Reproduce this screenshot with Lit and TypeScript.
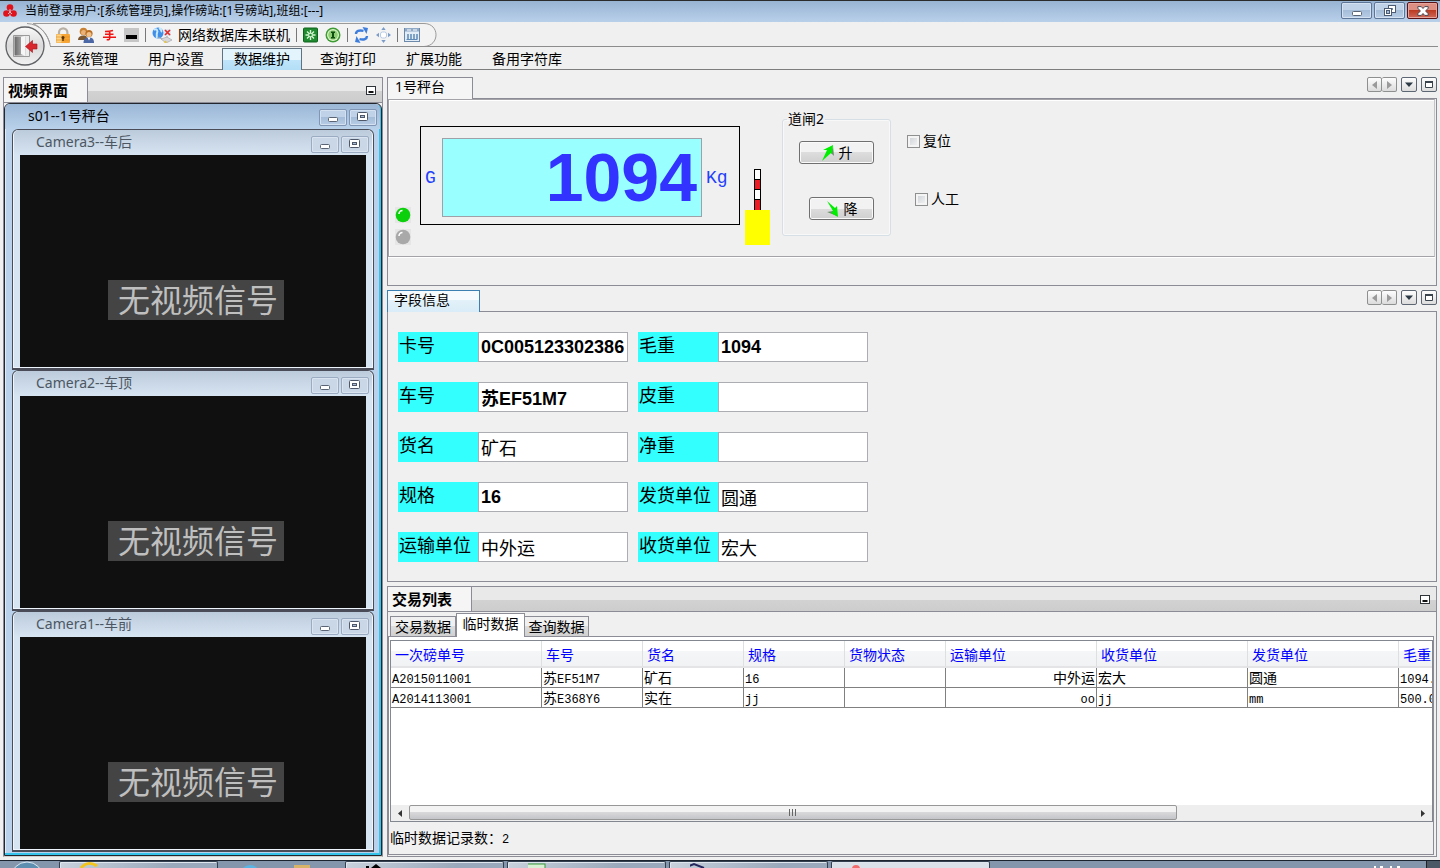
import { LitElement, html, css, svg, nothing } from "lit";
import { customElement, property, state } from "lit/decorators.js";
import { classMap } from "lit/directives/class-map.js";

const base = css`
  * { box-sizing: border-box; }
  button { font: inherit; color: inherit; margin: 0; padding: 0; border: 0; background: none; }
  svg { display: block; flex: none; }
  .winbtn {
    display: flex; align-items: center; justify-content: center;
    width: 28px; height: 17px; border: 1px solid #8096b4; border-radius: 2px;
    background: linear-gradient(#bfd2e7 50%, #a5bdd9 50%, #b8cde6);
    box-shadow: inset 0 0 0 1px #d3e1f1;
  }
`;

/* ---------- window glyphs ---------- */
const minGlyph = html`<svg width="12" height="10" viewBox="0 0 12 10"><rect x="1.500" y="5.500" width="9" height="4" rx="1" fill="#fff" stroke="#5b6474"/></svg>`;
const maxGlyph = html`<svg width="12" height="10" viewBox="0 0 12 10"><rect x=".5" y=".5" width="10" height="8" rx="1" fill="#fff" stroke="#4f5868"/><rect x="3.500" y="3.500" width="4" height="2" fill="#a9bdd6" stroke="#4f5868"/></svg>`;
const restoreGlyph = html`<svg width="12" height="12" viewBox="0 0 12 12"><rect x="4.500" y=".5" width="7" height="7" fill="#fff" stroke="#4c5a72"/><rect x="7" y="3" width="2" height="2" fill="#6f87a8"/><rect x=".5" y="3.500" width="7" height="7" fill="#fff" stroke="#4c5a72"/><rect x="2.500" y="5.500" width="3" height="3" fill="#a9c0dc" stroke="#4c5a72"/></svg>`;
const closeGlyph = html`<svg width="12" height="10" viewBox="0 0 12 10"><path d="M.8.6h3.500L6 2.500 7.700.6h3.500v1.600L8.600 5l2.600 2.700v1.700H7.700L6 7.500 4.300 9.400H.8V7.700L3.400 5 .8 2.200z" fill="#fff" stroke="#4b4650"/></svg>`;

/* ---------- tool icons ---------- */
const icons = {
  lock: svg`<path d="M4 8V5.500a4.200 4.200 0 0 1 8.400 0V8" fill="none" stroke="#b9b0a4" stroke-width="2.200"/><rect x="1" y="7" width="14" height="9" rx="1" fill="#f5a637"/><rect x="1.500" y="7.500" width="5" height="8" fill="#fbd48c"/><path d="M1 10h14M1 13h14" stroke="#e58f1f" stroke-width=".7"/><circle cx="8" cy="10.500" r="1.500" fill="#5a3208"/><path d="M7.300 11h1.400v3H7.300z" fill="#5a3208"/>`,
  users: svg`<circle cx="5.500" cy="4.500" r="3.800" fill="#c98133"/><path d="M0 13c0-3 2-4.500 5.500-4.500S9 10 9 13z" fill="#7b5730"/><circle cx="5.600" cy="5.500" r="2.500" fill="#e9b27a"/><circle cx="11" cy="6.500" r="3.600" fill="#b96f22"/><circle cx="11" cy="7.500" r="2.500" fill="#f0c08a"/><path d="M5.500 16c0-4 2-5.500 5.500-5.500s5 1.500 5 5.500z" fill="#4b67a5"/><path d="M9.500 10.600l1.500 3 1.500-3z" fill="#fff"/>`,
  hand: svg`<path d="M4 4.500c3 0 5.500-.3 8-1M4 7.300h8.500M2 10.300h13M8.700 4v7c0 2-1.500 2-3 1.500" fill="none" stroke="#f01414" stroke-width="1.600"/>`,
  minus: svg`<rect x="0" y="1" width="15" height="14" fill="#c6c6c6"/><rect x="2" y="8" width="11" height="4" fill="#000"/>`,
  net: svg`<circle cx="6" cy="6" r="5.500" fill="#3f8ee8"/><path d="M2 3c3-2 4 1 3 3s1 4-1 5M7 1c2 1 3 3 2 4" fill="none" stroke="#c8e9ff" stroke-width="2"/><rect x="12" y="2" width="7" height="7" fill="#dfe6ee"/><path d="M13 3l5 5M18 3l-5 5" stroke="#e02b2b" stroke-width="1.700"/><path d="M6 10l6 3M15 9v4" stroke="#9aa4ae"/><path d="M9 12l6-2 5 3-6 3z" fill="#d8d8dc" stroke="#a6a8ae" stroke-width=".7"/><circle cx="13.500" cy="15" r="1.200" fill="#e6c53c"/>`,
  burst: svg`<rect x=".5" y="1" width="14" height="14" rx="1" fill="#1f8a2f" stroke="#11631d"/><path d="M7.500 3v10M2.500 8h10M4 4.500l7 7M11 4.500l-7 7" stroke="#d9f7d4" stroke-width="1.400"/><circle cx="7.500" cy="8" r="1.300" fill="#1f8a2f"/>`,
  info: svg`<circle cx="8" cy="8" r="7.500" fill="#3f9b33"/><circle cx="8" cy="8" r="6" fill="#dff3cf"/><circle cx="8" cy="8" r="4.800" fill="#8fce74"/><path d="M6 4.500h4V6H9v4h1v1.500H6V10h1V6H6z" fill="#0d4f10"/>`,
  refresh: svg`<path d="M2 7C2 4 5 2.800 9.500 3.800" fill="none" stroke="#3d7ddc" stroke-width="2.400"/><path d="M8.500 0l5.500 1-1.500 6z" fill="#3d7ddc"/><path d="M13 9c0 3-3 4.200-7.500 3.200" fill="none" stroke="#3d7ddc" stroke-width="2.400"/><path d="M6.500 16L1 15l1.500-6z" fill="#3d7ddc"/>`,
  move: svg`<rect x="4.500" y="5" width="6" height="6" rx="2" fill="#fff" stroke="#b7cbe4"/><path d="M7.500 0l2.200 3H5.300zM7.500 16l2.200-3H5.300zM0 8l3-2.200v4.400zM15 8l-3-2.200v4.400z" fill="#7c9cc8"/>`,
  cal: svg`<rect x=".5" y="1.500" width="15" height="13" fill="#e3edf7" stroke="#6d89aa"/><rect x="1" y="1" width="14" height="3.500" fill="#8fa9c6"/><path d="M3 3h4M9 3h4" stroke="#fff"/><path d="M4 7v5M7 7v5M10 7v5M13 7v5" stroke="#5f8bb8" stroke-width="1.500"/><path d="M2.500 12.500h11" stroke="#5f8bb8"/>`,
};
const icon = (name: keyof typeof icons, w = 16) =>
  html`<svg width=${w} height="16" viewBox="0 0 ${w} 16">${icons[name]}</svg>`;

/** Sets runs of Latin text in the narrow fixed-width face. */
const mixed = (text: string) =>
  text.split(/([\x20-\x7e]+)/).filter(Boolean).map((part) =>
    /^[\x20-\x7e]/.test(part) ? html`<span class="mono">${part}</span>` : part);

@customElement("camera-pane")
export class CameraPane extends LitElement {
  @property() heading = "";

  static styles = [base, css`
    :host {
      display: flex; flex-direction: column; flex: 1; min-height: 0;
      border: 1px solid #4a4d57; border-bottom-width: 2px; border-radius: 6px 6px 0 0;
      background: #d7e4f2; padding: 0 7px 1px; box-shadow: inset 0 0 0 1px #eef5fc;
    }
    .bar {
      display: flex; align-items: center; gap: 2px; height: 25px; flex: none;
      background: linear-gradient(#bccbdb, #d7e4f2);
      margin: 0 -6px; padding: 3px 3px 0 22px; border-radius: 5px 5px 0 0;
    }
    .title { flex: 1; font-size: 14px; line-height: 18px; padding-bottom: 4px; color: #4c5763; }
    .winbtn { background: #c9d7e6; border-color: #9aabc2; box-shadow: inset 0 0 0 1px #d9e4f0; }
    .video { flex: 1; min-height: 0; background: #101010; display: flex; flex-direction: column; align-items: center; padding-left: 6px; }
    .top { flex: 124; }
    .bottom { flex: 47; }
    .signal {
      background: #444; color: #bfbfbf; font-size: 32px; line-height: 40px; padding: 0 6px 0 10px; white-space: nowrap;
    }
  `];

  render() {
    return html`
      <div class="bar">
        <span class="title">${this.heading}</span>
        <button class="winbtn" aria-label="最小化">${minGlyph}</button>
        <button class="winbtn" aria-label="最大化">${maxGlyph}</button>
      </div>
      <div class="video"><div class="top"></div><div class="signal">无视频信号</div><div class="bottom"></div></div>
    `;
  }
}

interface Column { name: string; width: number; }

@customElement("app-root")
export class AppRoot extends LitElement {
  @state() private menu = 2;
  @state() private tab = 1;

  private menus = ["系统管理", "用户设置", "数据维护", "查询打印", "扩展功能", "备用字符库"];
  private tabs = ["交易数据", "临时数据", "查询数据"];
  private fields: [string, string][] = [
    ["卡号", "0C005123302386"], ["毛重", "1094"],
    ["车号", "苏EF51M7"], ["皮重", ""],
    ["货名", "矿石"], ["净重", ""],
    ["规格", "16"], ["发货单位", "圆通"],
    ["运输单位", "中外运"], ["收货单位", "宏大"],
  ];
  private columns: Column[] = [
    { name: "一次磅单号", width: 151 }, { name: "车号", width: 101 }, { name: "货名", width: 101 },
    { name: "规格", width: 101 }, { name: "货物状态", width: 101 }, { name: "运输单位", width: 151 },
    { name: "收货单位", width: 151 }, { name: "发货单位", width: 151 }, { name: "毛重", width: 101 },
  ];
  private rows = [
    ["A2015011001", "苏EF51M7", "矿石", "16", "", "中外运", "宏大", "圆通", "1094.0"],
    ["A2014113001", "苏E368Y6", "实在", "jj", "", "oo", "jj", "mm", "500.0"],
  ];

  static styles = [base, css`
    :host {
      display: flex; flex-direction: column; height: 100vh; overflow: hidden;
      background: #f0f0f0; color: #000;
      font: 14px/18px "Noto Sans", "Noto Sans CJK SC", sans-serif;
    }

    .titlebar {
      display: flex; align-items: center; height: 22px; flex: none; gap: 2px;
      border-top: 1px solid #2b2b2b; padding: 0 2px 2px 3px;
      background: linear-gradient(#98b4d3, #b9d0ea);
    }
    .titlebar .caption { flex: 1; font-size: 12px; line-height: 16px; padding-left: 6px; white-space: nowrap; }
    .titlebar .winbtn { width: 31px; height: 17px; border-color: #5d7596; }
    .titlebar .close {
      border-color: #5a1216; background: linear-gradient(#dd8f84 50%, #bb3b22 50%, #d0695a);
      box-shadow: inset 0 0 0 1px #e6a59c;
    }

    .ribbon { position: relative; display: grid; grid-template-columns: 50px 1fr; flex: none; height: 48px; border-bottom: 1px solid #7d7d7d; }
    .outline { position: absolute; left: 0; top: 0; }
    .orb { grid-row: 1 / 3; padding: 4px 0 0 5px; position: relative; }
    .tools { position: relative; display: flex; align-items: center; height: 25px; border-bottom: 1px solid #8c8c8c; padding: 2px 0 0 5px; gap: 7px; margin-right: 2px; }
    .tools button { display: flex; }
    .sep { width: 1px; height: 14px; margin: 0 -1px; background: #777; }
    .dbstate { display: flex; align-items: center; gap: 6px; white-space: nowrap; }
    .menus { display: flex; gap: 6px; height: 22px; }
    .menus button { padding: 0 12px; height: 22px; line-height: 20px; border: 1px solid transparent; border-width: 1px 0 0; white-space: nowrap; }
    .menus .on { border: 1px solid #60727f; border-bottom: 0; padding: 0 11px; background: linear-gradient(#e3f4fc 50%, #bfe5fa 50%, #b3def6); }

    main { flex: 1; min-height: 0; display: flex; gap: 4px; padding: 7px 3px 3px; }

    .left { width: 380px; flex: none; display: flex; flex-direction: column; border: 1px solid #8b8c95; border-bottom-color: #cfcfcf; }
    .dockhead { display: flex; align-items: center; height: 25px; flex: none; border-bottom: 1px solid #8b8c95; background: linear-gradient(#e9e9e9 55%, #d2d2d2 55%, #cdcdcd); padding-right: 5px; }
    .dockhead h2 { margin: 0; font-size: 15px; line-height: 24px; height: 24px; width: 84px; padding-left: 4px; background: #f5f5f5; border-right: 1px solid #8b8c95; }
    .dockhead .grow { flex: 1; }
    .station {
      flex: 1; min-height: 0; display: flex; flex-direction: column;
      border: 1px solid #23262c; border-radius: 6px 6px 0 0; background: #b9d1ea;
      padding: 0 7px 3px; box-shadow: inset -2px -2px 0 0 #34c3ea, inset 1px 1px 0 #e0ecf8;
    }
    .stationbar { display: flex; align-items: center; gap: 2px; height: 25px; flex: none; margin: 0 -6px 0 -7px; padding: 1px 3px 0 23px; border-radius: 5px 5px 0 0; background: linear-gradient(#9bb7d6, #b9d1ea); }
    .stationbar .title { flex: 1; padding-bottom: 2px; }

    .right { flex: 1; min-width: 0; display: flex; flex-direction: column; gap: 4px; }
    .strip { display: flex; align-items: flex-end; height: 22px; }
    .strip .tab { height: 22px; width: 86px; text-align: left; padding: 0 0 3px 7px; border: 1px solid #8b8c95; border-bottom: 0; background: #f5f5f5; position: relative; z-index: 1; }
    .strip .tab.hot { width: 93px; border-color: #3c7fb1; border-bottom: 0; padding-left: 6px; background: linear-gradient(#f5fafd 45%, #e3f1f9 45%, #d9ecf7); }
    .strip .ctl { margin-left: auto; display: flex; gap: 4px; align-self: flex-start; }
    .ctl button { display: flex; align-items: center; justify-content: center; width: 16px; height: 15px; border: 1px solid #5d6673; border-radius: 2px; background: linear-gradient(#fdfdfd, #dcdcdc); }
    .ctl .pair { display: flex; }
    .ctl .pair button { width: 15px; border-color: #8e8f8f; }
    .ctl .pair button + button { border-left: 0; }
    .box { border: 1px solid #8b8c95; margin-top: -1px; }

    .weigh { display: flex; align-items: flex-start; height: 158px; border: 1px solid #a3a3a8; border-right-color: #c4c4c8; box-shadow: inset 1px 1px 0 #fff, 0 1px 0 #fff; padding-left: 5px; margin-right: 1px; }
    .leds { display: flex; flex-direction: column; gap: 6px; margin: 107px 9px 0 1px; }
    .meter { display: flex; align-items: center; gap: 4px; margin-top: 26px; width: 320px; height: 99px; border: 1px solid #000; padding: 4px 0 0 4px; color: #1f3fff; font: 18px/20px "Liberation Mono", monospace; }
    .meter .g { width: 13px; }
    .meter output { width: 260px; height: 79px; border: 1px solid #a0a0a8; background: #99ffff; color: #3333ff; text-align: right; padding: 0 4px 0 0; font: bold 68px/76px "Liberation Sans", Arial, sans-serif; }
    .gatepost { margin: 69px 0 0 5px; }
    fieldset { margin: 10px 0 0 12px; width: 109px; height: 126px; border: 1px solid #d5dfe5; border-radius: 3px; padding: 13px 16px 0; display: flex; flex-direction: column; align-items: flex-end; gap: 33px; box-shadow: inset 0 0 0 1px #f8f8f8; }
    fieldset legend { padding: 0 1px; margin-left: -12px; line-height: 18px; }
    .push { display: flex; align-items: center; justify-content: center; gap: 4px; width: 75px; height: 23px; flex: none; border: 1px solid #707070; border-radius: 3px; background: linear-gradient(#f2f2f2 50%, #dddddd 50%, #cfcfcf); box-shadow: inset 0 0 0 1px #fafafa; }
    .push.short { width: 65px; }
    .checks { display: flex; flex-direction: column; gap: 40px; margin: 32px 0 0 16px; }
    .checks label { display: flex; align-items: center; gap: 3px; }
    .checks label + label { padding-left: 8px; }
    .checks input { appearance: none; margin: 0; width: 13px; height: 13px; border: 1px solid #8e8f8f; background: linear-gradient(135deg, #cbd0d5, #f6f6f6); box-shadow: inset 0 0 0 2px #f4f4f4; }
    .weighpad { height: 28px; }

    .fields { display: grid; grid-template-columns: 230px 230px; gap: 20px 10px; padding: 20px 10px 19px; }
    .field { display: flex; height: 30px; font-size: 18px; }
    .field label { width: 80px; background: #33ffff; line-height: 26px; padding-left: 1px; white-space: nowrap; }
    .field input { width: 150px; height: 30px; border: 1px solid #abadb3; border-radius: 0; background: #fff; padding: 0 2px; outline: 0; font: 18px/28px "Liberation Sans", "Noto Sans CJK SC", sans-serif; color: #000; }
    .field input.bold { font-weight: bold; }

    .trade { flex: 1; min-height: 0; display: flex; flex-direction: column; border: 1px solid #8b8c95; }
    .tabs { display: flex; align-items: flex-end; height: 24px; flex: none; padding-left: 2px; background: #f0f0f0; }
    .tabs button { height: 20px; width: 66px; line-height: 18px; border: 1px solid #8b8c95; border-bottom: 0; background: linear-gradient(#f0f0f0 45%, #dedede 45%, #d0d0d0); white-space: nowrap; }
    .tabs button + button { width: 64px; }
    .tabs .on + button { border-left: 0; }
    .tabs button.on { width: 69px; height: 24px; line-height: 18px; padding-bottom: 3px; background: #fff; position: relative; z-index: 1; margin-bottom: -1px; }
    .sheet { flex: 1; min-height: 0; display: flex; flex-direction: column; border: 1px solid #8b8c95; padding: 3px 0 0 1px; margin: 0 2px 1px 0; background: #fff; }
    .grid { flex: 1; min-height: 0; display: flex; flex-direction: column; border: 1px solid #828790; background: #fff; }
    .scroller { flex: 1; min-height: 0; overflow: hidden; }
    table { border-collapse: separate; border-spacing: 0; table-layout: fixed; width: 1109px; }
    th { height: 27px; padding: 2px 0 0 4px; font-weight: normal; text-align: left; color: #0000ff; line-height: 20px; border-right: 1px solid #dedfe1; border-bottom: 2px solid #e4e4e6; background: linear-gradient(#fff 40%, #f5f6f8 40%, #f1f2f4); }
    td { height: 20px; padding: 0 0 0 1px; line-height: 18px; border-right: 1px solid #808080; border-bottom: 1px solid #808080; white-space: nowrap; overflow: hidden; }
    td.num { text-align: right; padding-right: 1px; }
    .mono { font: 12px/12px "Liberation Mono", monospace; }
    .hbar { display: flex; height: 16px; flex: none; background: #eeeeee; }
    .hbar .arrow { width: 18px; display: flex; align-items: center; justify-content: center; }
    .hbar .track { flex: 1; }
    .hbar .thumb { height: 15px; border: 1px solid #979797; border-radius: 2px; background: linear-gradient(#f3f3f3 45%, #dadadc 45%, #c4c5c9); display: flex; align-items: center; justify-content: center; }
    .count { height: 32px; flex: none; background: #f0f0f0; line-height: 32px; margin-left: -1px; padding-left: 1px; white-space: nowrap; }
    .count .digit { font: 12px/12px "Liberation Mono", monospace; }

    .taskbar { height: 8px; flex: none; display: flex; align-items: flex-start; overflow: hidden; border-top: 1px solid #1c2430; background: #8496ac; padding: 0 0 0 12px; }
    .task { display: flex; width: 159px; height: 8px; margin-right: 3px; padding-left: 20px; border: 1px solid #33404f; border-bottom: 0; border-radius: 2px 2px 0 0; background: linear-gradient(135deg, #c9d2dd, #9aa9bb 70%); box-shadow: inset 1px 1px 0 #dfe6ee; }
    .task.active { background: #dbe1e9; }
    .pinned { width: 124px; display: flex; gap: 33px; padding-left: 18px; }
    .corner { width: 14px; height: 8px; background: #4c5865; border-left: 1px solid #222; }
    .clock { margin-left: auto; margin-right: 22px; }
  `];

  private stripControls() {
    return html`<div class="ctl">
      <div class="pair">
        <button aria-label="向左"><svg width="5" height="8"><path d="M5 0v8L0 4z" fill="#9a9a9a"/></svg></button>
        <button aria-label="向右"><svg width="5" height="8"><path d="M0 0v8l5-4z" fill="#9a9a9a"/></svg></button>
      </div>
      <button aria-label="列表"><svg width="8" height="5"><path d="M0 .5h8L4 5z" fill="#2b3a44"/></svg></button>
      <button aria-label="最大化"><svg width="8" height="7"><path d="M.5.5h7v6h-7z" fill="#fff" stroke="#39434d"/><path d="M0 1h8" stroke="#39434d" stroke-width="2"/></svg></button>
    </div>`;
  }

  private dockMin() {
    return html`<button aria-label="最小化"><svg width="11" height="9"><rect x=".5" y=".5" width="9" height="8" fill="#fff" stroke="#2f3438"/><path d="M2.500 6h5" stroke="#111" stroke-width="2"/></svg></button>`;
  }

  private led(color: string) {
    return html`<svg width="16" height="16" viewBox="0 0 16 16"><rect width="16" height="16" fill="#e6e6e6"/><circle cx="8" cy="8" r="7.300" fill=${color}/><path d="M4 7c0-2 1.500-3.500 3.500-3.500" fill="none" stroke="#fff" stroke-width="1.600"/></svg>`;
  }

  render() {
    return html`
      <header class="titlebar">
        <svg width="14" height="14" viewBox="0 0 14 14"><circle cx="7" cy="3.500" r="3.300" fill="#e0131c"/><circle cx="3.500" cy="9.500" r="3.300" fill="#e0131c"/><circle cx="10.500" cy="9.500" r="3.300" fill="#e0131c"/><path d="M7 5v4M5 10l2-2 2 2" stroke="#f3b4b8" fill="none"/></svg>
        <span class="caption">当前登录用户:[系统管理员],操作磅站:[1号磅站],班组:[---]</span>
        <button class="winbtn" aria-label="最小化">${minGlyph}</button>
        <button class="winbtn" aria-label="还原">${restoreGlyph}</button>
        <button class="winbtn close" aria-label="关闭">${closeGlyph}</button>
      </header>

      <div class="ribbon">
        <svg class="outline" width="440" height="26" viewBox="0 0 440 26">
          <path d="M27 1.500C40 2 48 12 50.500 24.500H424C440 24 440 1.500 424 1.500H33C43 6 48 14 50 22" fill="#f3f3f3" stroke="#9a9a9a"/>
        </svg>
        <div class="orb">
          <button aria-label="退出">
            <svg width="40" height="40" viewBox="0 0 40 40">
              <defs><linearGradient id="orb" x1="0" y1="0" x2="0" y2="1"><stop offset="0" stop-color="#fafafa"/><stop offset=".5" stop-color="#d9d9d9"/><stop offset="1" stop-color="#f1f1f1"/></linearGradient>
              <linearGradient id="door" x1="0" y1="0" x2="1" y2="0"><stop offset="0" stop-color="#686868"/><stop offset="1" stop-color="#c8c8c8"/></linearGradient></defs>
              <circle cx="20" cy="20" r="19" fill="url(#orb)" stroke="#5f6164" stroke-width="1.300"/>
              <path d="M8.500 9.500h16v21h-16z" fill="#ececec" stroke="#9a9a9a"/>
              <path d="M9.500 10.500h11v19h-11z" fill="url(#door)"/><path d="M16 11l4-1v20l-4-2z" fill="#f6f6f6"/>
              <path d="M20.500 20.500l7-6v3.500h4.500v5h-4.500v3.500z" fill="#d9272e" stroke="#a3151b" stroke-width=".6"/>
            </svg>
          </button>
        </div>
        <div class="tools">
          <button aria-label="锁定">${icon("lock")}</button>
          <button aria-label="用户">${icon("users")}</button>
          <button aria-label="手动">${icon("hand")}</button>
          <button aria-label="收起">${icon("minus", 15)}</button>
          <span class="sep"></span>
          <span class="dbstate">${icon("net", 20)}网络数据库未联机</span>
          <span class="sep"></span>
          <button aria-label="连接">${icon("burst", 15)}</button>
          <button aria-label="信息">${icon("info")}</button>
          <span class="sep"></span>
          <button aria-label="刷新">${icon("refresh", 15)}</button>
          <button aria-label="移动">${icon("move", 15)}</button>
          <span class="sep"></span>
          <button aria-label="日历">${icon("cal")}</button>
        </div>
        <nav class="menus">
          ${this.menus.map((m, i) => html`<button class=${classMap({ on: i === this.menu })} @click=${() => (this.menu = i)}>${m}</button>`)}
        </nav>
      </div>

      <main>
        <section class="left">
          <div class="dockhead"><h2>视频界面</h2><span class="grow"></span>${this.dockMin()}</div>
          <div class="station">
            <div class="stationbar"><span class="title">s01--1号秤台</span>
              <button class="winbtn" aria-label="最小化">${minGlyph}</button>
              <button class="winbtn" aria-label="最大化">${maxGlyph}</button>
            </div>
            ${["Camera3--车后", "Camera2--车顶", "Camera1--车前"].map((c) => html`<camera-pane heading=${c}></camera-pane>`)}
          </div>
        </section>

        <div class="right">
          <section>
            <div class="strip"><button class="tab">1号秤台</button>${this.stripControls()}</div>
            <div class="box">
              <div class="weigh">
                <div class="leds">${this.led("#0bd00b")}${this.led("#a9a9a9")}</div>
                <div class="meter"><span class="g">G</span><output>1094</output><span>Kg</span></div>
                <svg class="gatepost" width="25" height="76" viewBox="0 0 25 76">
                  <rect x="9.500" y=".5" width="6" height="41" fill="#fff" stroke="#000"/>
                  <path d="M10 11h5v9h-5zM10 31h5v10h-5z" fill="#ed1c24"/><path d="M9 10.500h7M9 20.500h7M9 30.500h7" stroke="#000"/>
                  <rect y="41" width="25" height="35" fill="#ff0"/>
                </svg>
                <fieldset>
                  <legend>道闸2</legend>
                  <button class="push"><svg width="14" height="16" viewBox="0 0 14 16"><path d="M12 1l1 10-3-3z" fill="#6d8b6d"/><path d="M12 0L2 5h4L1 16l9-8 1 1z" fill="#0e0"/></svg>升</button>
                  <button class="push short"><svg width="14" height="16" viewBox="0 0 14 16"><path d="M1 11l10 4-4-5z" fill="#6d8b6d"/><path d="M1 0l8 7 2-2 1 11-7-4 2-2z" fill="#0e0"/></svg>降</button>
                </fieldset>
                <div class="checks">
                  <label><input type="checkbox">复位</label>
                  <label><input type="checkbox">人工</label>
                </div>
              </div>
              <div class="weighpad"></div>
            </div>
          </section>

          <section>
            <div class="strip"><button class="tab hot">字段信息</button>${this.stripControls()}</div>
            <div class="box fields">
              ${this.fields.map(([label, value], i) => html`
                <div class="field"><label for="f${i}">${label}</label><input id="f${i}" class=${classMap({ bold: /\d/.test(value) })} .value=${value}></div>`)}
            </div>
          </section>

          <section class="trade">
            <div class="dockhead"><h2>交易列表</h2><span class="grow"></span>${this.dockMin()}</div>
            <div class="tabs" role="tablist">
              ${this.tabs.map((t, i) => html`<button role="tab" class=${classMap({ on: i === this.tab })} @click=${() => (this.tab = i)}>${t}</button>`)}
            </div>
            <div class="sheet">
              <div class="grid">
                <div class="scroller">
                  <table>
                    <colgroup>${this.columns.map((c) => html`<col style="width:${c.width}px">`)}</colgroup>
                    <thead><tr>${this.columns.map((c) => html`<th>${c.name}</th>`)}</tr></thead>
                    <tbody>${this.rows.map((r) => html`<tr>${r.map((v, i) => html`<td class=${i === 5 ? "num" : nothing}>${mixed(v)}</td>`)}</tr>`)}</tbody>
                  </table>
                </div>
                <div class="hbar">
                  <span class="arrow"><svg width="4" height="7"><path d="M4 0v7L0 3.500z" fill="#333"/></svg></span>
                  <div class="track"><div class="thumb" style="width:76.400%"><svg width="9" height="7"><path d="M1.500 0v7M4.500 0v7M7.500 0v7" stroke="#666"/></svg></div></div>
                  <span class="arrow"><svg width="4" height="7"><path d="M0 0v7l4-3.500z" fill="#333"/></svg></span>
                </div>
              </div>
              <div class="count">临时数据记录数：<span class="digit">2</span></div>
            </div>
          </section>
        </div>
      </main>

      <footer class="taskbar">
        <svg width="47" height="7" viewBox="0 0 47 7"><circle cx="15" cy="17" r="16" fill="#5f8fb0" stroke="#d9e8f2"/></svg>
        <div class="task"><svg width="20" height="6"><path d="M1 6c4-5 10-6 16-2" fill="none" stroke="#f3c51c" stroke-width="3"/></svg></div>
        <div class="pinned"><svg width="22" height="7"><circle cx="11" cy="14" r="10" fill="#5ab4e4"/></svg><svg width="18" height="7"><rect y="4" width="16" height="4" fill="#d9b468"/></svg></div>
        <div class="task"><svg width="26" height="6"><path d="M-9 5h12" stroke="#000" stroke-width="2"/><path d="M5 6l5-4 5 4z" fill="#000"/></svg></div>
        <div class="task"><svg width="20" height="6"><rect x="-10" y="2" width="27" height="6" fill="#d9f0d4" stroke="#3a9b3a"/></svg></div>
        <div class="task"><svg width="20" height="6"><path d="M-6 6L4 2l10 4" fill="none" stroke="#25285c" stroke-width="2"/></svg></div>
        <div class="task active"><svg width="10" height="6"><circle cx="4" cy="7" r="4" fill="#f36b6b"/></svg></div>
        <svg class="clock" width="32" height="7"><path d="M2 6h2M8 6h3M18 6h2M25 6h3" stroke="#fff" stroke-width="2"/></svg>
        <div class="corner"></div>
      </footer>
    `;
  }
}
